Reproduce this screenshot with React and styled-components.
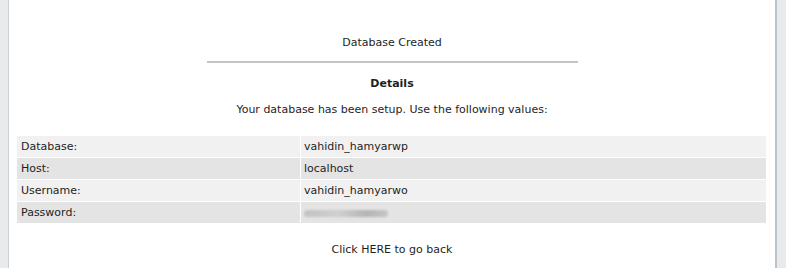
import styled, { createGlobalStyle } from "styled-components";

const GlobalStyle = createGlobalStyle`
    html, body {
        margin: 0;
        padding: 0;
        background: #e8eaec;
    }
`

const rows = [
    { label: "Database:", value: "vahidin_hamyarwp" },
    { label: "Host:", value: "localhost" },
    { label: "Username:", value: "vahidin_hamyarwo" },
    { label: "Password:", value: null },
]

const App = () => {
    return (
        <>
            <GlobalStyle />
            <Frame>
                <Panel>
                    <Title>Database Created</Title>
                    <Rule />
                    <Heading>Details</Heading>
                    <Note>Your database has been setup. Use the following values:</Note>
                    <Table>
                        <tbody>
                            {rows.map((row, index) => {
                                return (
                                    <Row key={index} $alt={index % 2 === 1}>
                                        <Label>{row.label}</Label>
                                        <Value>
                                            {row.value !== null && row.value}
                                            {row.value === null && <Blur />}
                                        </Value>
                                    </Row>
                                )
                            })}
                        </tbody>
                    </Table>
                    <Back>Click HERE to go back</Back>
                </Panel>
            </Frame>
        </>
    )
}

export default App

const Frame = styled.div`
    padding: 0 9px 0 8px;
    height: 268px;
    box-sizing: border-box;
`

const Panel = styled.div`
    background: #fff;
    height: 100%;
    border-left: 1px solid #c9d1d7;
    border-right: 2px solid #b9c5cd;
    padding: 29px 8px 0 8px;
    box-sizing: border-box;
    font-family: "DejaVu Sans", Verdana, sans-serif;
    font-size: 11px;
    color: #1e1e1e;
    text-align: center;
`

const Title = styled.div`
    line-height: 28px;
`

const Rule = styled.div`
    width: 371px;
    height: 2px;
    margin: 4px auto 0 auto;
    background: #c4c4c4;
`

const Heading = styled.div`
    font-weight: bold;
    margin-top: 13px;
    line-height: 16px;
`

const Note = styled.div`
    margin-top: 10px;
    line-height: 16px;
`

const Table = styled.table`
    width: 749px;
    margin-top: 17px;
    border-collapse: separate;
    border-spacing: 0 1px;
    text-align: left;
`

const Row = styled.tr`
    background: ${(props) => props.$alt ? "#e4e4e4" : "#f1f1f1"};
    height: 21px;
`

const Label = styled.td`
    width: 279px;
    padding: 0 0 0 4px;
    border-right: 1px solid #fff;
`

const Value = styled.td`
    padding: 0 0 0 3px;
`

const Blur = styled.span`
    display: inline-block;
    width: 84px;
    height: 7px;
    vertical-align: middle;
    border-radius: 4px;
    background: linear-gradient(90deg, #c2c2c2 0%, #d0d0d0 40%, #b4b4b4 75%, #c6c6c6 100%);
    filter: blur(1.2px);
`

const Back = styled.div`
    margin-top: 19px;
`
